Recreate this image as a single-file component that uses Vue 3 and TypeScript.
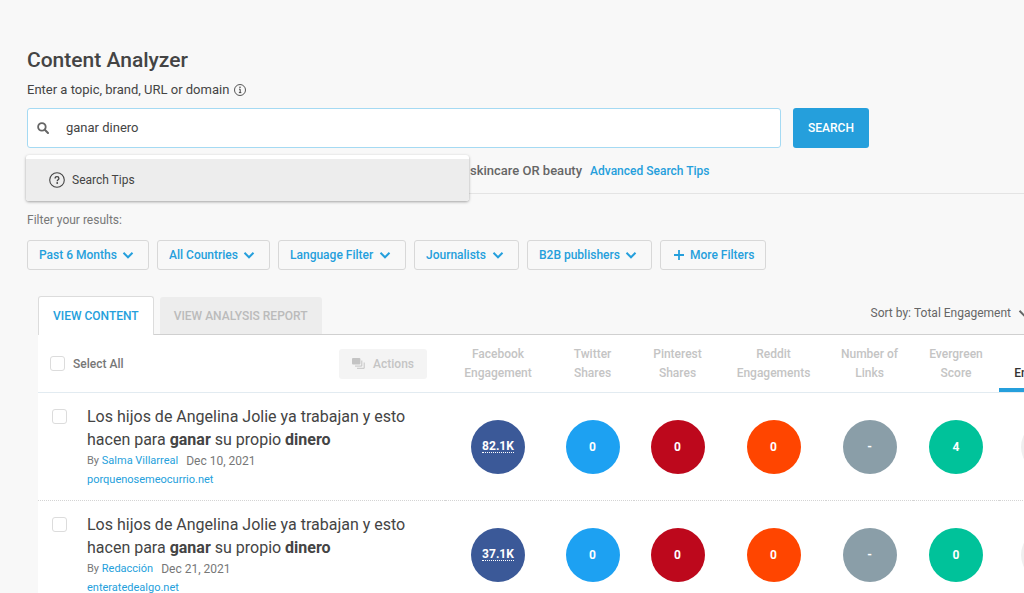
<script setup lang="ts">
import { ref } from 'vue'

interface Metric {
  key: string
  lines: [string, string]
}

interface Article {
  id: number
  author: string
  date: string
  domain: string
  values: Record<string, string>
}

const query = ref('ganar dinero')
const selected = ref<number[]>([])
const allSelected = ref(false)
const activeTab = ref<'content' | 'report'>('content')

const filters: string[] = [
  'Past 6 Months',
  'All Countries',
  'Language Filter',
  'Journalists',
  'B2B publishers',
]

const metrics: Metric[] = [
  { key: 'facebook', lines: ['Facebook', 'Engagement'] },
  { key: 'twitter', lines: ['Twitter', 'Shares'] },
  { key: 'pinterest', lines: ['Pinterest', 'Shares'] },
  { key: 'reddit', lines: ['Reddit', 'Engagements'] },
  { key: 'links', lines: ['Number of', 'Links'] },
  { key: 'evergreen', lines: ['Evergreen', 'Score'] },
  { key: 'total', lines: ['Total', 'Engagement'] },
]

const articles: Article[] = [
  {
    id: 1,
    author: 'Salma Villarreal',
    date: 'Dec 10, 2021',
    domain: 'porquenosemeocurrio.net',
    values: { facebook: '82.1K', twitter: '0', pinterest: '0', reddit: '0', links: '-', evergreen: '4' },
  },
  {
    id: 2,
    author: 'Redacción',
    date: 'Dec 21, 2021',
    domain: 'enteratedealgo.net',
    values: { facebook: '37.1K', twitter: '0', pinterest: '0', reddit: '0', links: '-', evergreen: '0' },
  },
]

function toggleAll() {
  selected.value = allSelected.value ? articles.map((a) => a.id) : []
}
</script>

<template>
  <main class="page">
    <header class="intro">
      <h1>Content Analyzer</h1>
      <label class="prompt" for="query">
        Enter a topic, brand, URL or domain
        <svg class="info" viewBox="0 0 12 12" aria-hidden="true">
          <circle cx="6" cy="6" r="5.5" fill="none" stroke="currentColor" stroke-width=".9" />
          <path d="M5 5.2h1.2v3.2M4.9 8.6h2.4" fill="none" stroke="currentColor" stroke-width="1" />
          <circle cx="6" cy="3.3" r=".8" fill="currentColor" />
        </svg>
      </label>

      <form class="search" @submit.prevent>
        <div class="field">
          <svg class="magnifier" viewBox="0 0 12 12" aria-hidden="true">
            <circle cx="4.9" cy="4.9" r="3.8" fill="none" stroke="currentColor" stroke-width="1.8" />
            <path d="M7.8 7.8l3.2 3.2" stroke="currentColor" stroke-width="2" stroke-linecap="round" />
          </svg>
          <input id="query" v-model="query" type="text" autocomplete="off" />
          <div class="suggestions">
            <button type="button" class="suggestion">
              <svg viewBox="0 0 16 16" aria-hidden="true">
                <circle cx="8" cy="8" r="7.3" fill="none" stroke="currentColor" stroke-width="1.1" />
                <path
                  d="M6.1 6.5c0-1.1.8-1.8 1.9-1.8s1.9.7 1.9 1.7c0 1.3-1.7 1.4-1.7 2.9"
                  fill="none"
                  stroke="currentColor"
                  stroke-width="1.3"
                />
                <circle cx="8.2" cy="11" r=".9" fill="currentColor" />
              </svg>
              Search Tips
            </button>
          </div>
        </div>
        <button type="submit" class="submit">SEARCH</button>
      </form>

      <p class="hint">
        <strong>skincare OR beauty</strong>
        <a href="#">Advanced Search Tips</a>
      </p>
    </header>

    <section class="filters">
      <p>Filter your results:</p>
      <div class="filter-row">
        <label v-for="name in filters" :key="name" class="filter">
          <select :aria-label="name">
            <option>{{ name }}</option>
          </select>
          <svg class="chevron" viewBox="0 0 12 12" aria-hidden="true">
            <path d="M1.5 3.8L6 8.3l4.5-4.5" fill="none" stroke="currentColor" stroke-width="2" />
          </svg>
        </label>
        <button type="button" class="filter more">
          <svg viewBox="0 0 12 12" aria-hidden="true">
            <path d="M6 1v10M1 6h10" stroke="currentColor" stroke-width="1.8" />
          </svg>
          More Filters
        </button>
      </div>
    </section>

    <section class="results">
      <div class="tabs">
        <button
          type="button"
          class="tab"
          :class="{ active: activeTab === 'content' }"
          @click="activeTab = 'content'"
        >
          VIEW CONTENT
        </button>
        <button
          type="button"
          class="tab"
          :class="{ active: activeTab === 'report' }"
          @click="activeTab = 'report'"
        >
          VIEW ANALYSIS REPORT
        </button>
        <label class="sort">
          Sort by:
          <select>
            <option>Total Engagement</option>
          </select>
          <svg class="chevron" viewBox="0 0 12 12" aria-hidden="true">
            <path d="M1.5 3.8L6 8.3l4.5-4.5" fill="none" stroke="currentColor" stroke-width="2" />
          </svg>
        </label>
      </div>

      <table>
        <colgroup>
          <col />
          <col v-for="m in metrics" :key="m.key" :class="'col-' + m.key" />
        </colgroup>
        <thead>
          <tr>
            <th scope="col">
              <div class="bulk">
                <label>
                  <input v-model="allSelected" type="checkbox" @change="toggleAll" />
                  Select All
                </label>
                <button type="button" class="actions" disabled>
                  <svg viewBox="0 0 13 11" aria-hidden="true">
                    <rect x="0" y="0" width="8.4" height="6.6" rx="1" fill="currentColor" />
                    <path d="M9.8 2.5v5.6H3M12.2 4.5v5.8H5" fill="none" stroke="currentColor" stroke-width="1" />
                  </svg>
                  Actions
                </button>
              </div>
            </th>
            <th v-for="m in metrics" :key="m.key" scope="col" class="metric" :class="{ sorted: m.key === 'total' }">
              {{ m.lines[0] }}<br />{{ m.lines[1] }}
            </th>
          </tr>
        </thead>
        <tbody>
          <tr v-for="a in articles" :key="a.id">
            <td>
              <div class="article">
                <input v-model="selected" type="checkbox" :value="a.id" :aria-label="a.domain" />
                <div>
                  <h2>
                    Los hijos de Angelina Jolie ya trabajan y esto hacen para <strong>ganar</strong> su propio
                    <strong>dinero</strong>
                  </h2>
                  <p class="byline">
                    <span>By <a href="#">{{ a.author }}</a></span>
                    <time>{{ a.date }}</time>
                  </p>
                  <a class="domain" href="#">{{ a.domain }}</a>
                </div>
              </div>
            </td>
            <td v-for="m in metrics" :key="m.key" class="score">
              <span class="bubble" :class="m.key"><span>{{ a.values[m.key] }}</span></span>
            </td>
          </tr>
        </tbody>
      </table>
    </section>
  </main>
</template>

<style>
body {
  background: #f8f8f8;
}
</style>

<style scoped>
.page {
  min-height: 100vh;
  box-sizing: border-box;
  padding-top: 46px;
  overflow: hidden;
  background: #f8f8f8;
  color: #444;
  font-family: Roboto, "Liberation Sans", sans-serif;
  font-size: 12px;
  line-height: 20px;
}
h1,
h2,
p {
  margin: 0;
}
button,
input,
select {
  margin: 0;
  padding: 0;
  border: 0;
  background: none;
  color: inherit;
  font: inherit;
}
select {
  appearance: none;
  outline: 0;
}
a {
  color: #259fdc;
  text-decoration: none;
}
svg {
  flex: none;
}
.intro {
  margin-left: 27px;
  padding-bottom: 12px;
  border-bottom: 1px solid #e4e4e4;
}
h1 {
  font-size: 21px;
  font-weight: 500;
  line-height: 28px;
}
.prompt {
  display: flex;
  align-items: center;
  gap: 5px;
  margin-top: 6px;
  font-size: 13px;
}
.info {
  width: 12px;
  height: 12px;
}
.search {
  display: flex;
  gap: 12px;
  max-width: 842px;
  margin-top: 8px;
}
.field {
  position: relative;
  display: flex;
  flex: 1;
  align-items: center;
  gap: 17px;
  box-sizing: border-box;
  height: 40px;
  padding-left: 9px;
  border: 1px solid #a5daf3;
  border-radius: 3px;
  background: #fff;
}
.magnifier {
  width: 12px;
  height: 12px;
  color: #666;
}
.field input {
  flex: 1;
  min-width: 0;
  outline: 0;
  font-size: 13px;
}
.submit {
  width: 76px;
  height: 40px;
  border-radius: 3px;
  background: #259fdc;
  color: #fff;
  font-weight: 500;
}
.suggestions {
  position: absolute;
  z-index: 2;
  top: 46px;
  left: -2px;
  width: 443px;
  padding-top: 4px;
  border-radius: 3px;
  background: #fff;
  box-shadow: 0 1px 3px rgba(0, 0, 0, 0.35);
}
.suggestion {
  display: flex;
  align-items: center;
  gap: 7px;
  width: 100%;
  height: 42px;
  padding-left: 23px;
  border-radius: 0 0 3px 3px;
  background: #ededed;
}
.suggestion svg {
  width: 16px;
  height: 16px;
}
.hint {
  display: flex;
  gap: 8px;
  margin: 13px 0 0 443px;
  color: #666;
}
.hint strong {
  font-size: 13px;
  font-weight: 500;
}
.hint a {
  font-weight: 500;
}
.filters {
  margin: 16px 0 0 27px;
  color: #777;
}
.filter-row {
  display: flex;
  gap: 8px;
  margin-top: 10px;
}
.filter {
  display: flex;
  align-items: center;
  gap: 5px;
  box-sizing: border-box;
  height: 30px;
  padding: 0 14px 0 11px;
  border: 1px solid #d8d8d8;
  border-radius: 3px;
  color: #259fdc;
  font-weight: 500;
}
.filter svg {
  width: 12px;
  height: 12px;
}
.more {
  padding: 0 11px 0 12px;
}
.results {
  min-width: 1059px;
  margin: 26px 0 0 38px;
}
.tabs {
  display: flex;
  align-items: flex-end;
  gap: 6px;
  border-bottom: 1px solid #d0d0d0;
}
.tab {
  height: 37px;
  padding: 0 14px;
  border-radius: 3px 3px 0 0;
  background: #ededed;
  color: #bbb;
  font-weight: 500;
}
.tab.active {
  height: 39px;
  margin-bottom: -1px;
  border: 1px solid #dcdcdc;
  border-bottom: 0;
  background: #fff;
  color: #259fdc;
}
.sort {
  display: flex;
  align-items: center;
  gap: 3px;
  margin: 0 67px 11px auto;
  color: #666;
}
.chevron {
  width: 12px;
  height: 12px;
}
.sort .chevron {
  margin-left: 3px;
}
table {
  width: 100%;
  table-layout: fixed;
  border-collapse: collapse;
  background: #fff;
}
.col-facebook {
  width: 106px;
}
.col-twitter {
  width: 83px;
}
.col-pinterest {
  width: 87px;
}
.col-reddit {
  width: 105px;
}
.col-links {
  width: 87px;
}
.col-evergreen {
  width: 86px;
}
.col-total {
  width: 98px;
}
th,
td {
  padding: 0;
}
th {
  height: 57px;
  border-bottom: 1px solid #e2ebf1;
  color: #777;
  font-weight: 500;
}
.bulk {
  display: flex;
  align-items: center;
  justify-content: space-between;
  padding: 0 18px 0 12px;
}
.bulk label {
  display: flex;
  align-items: center;
  gap: 8px;
}
input[type="checkbox"] {
  appearance: none;
  flex: none;
  box-sizing: border-box;
  width: 15px;
  height: 15px;
  border: 1px solid #dcdcdc;
  border-radius: 3px;
  background: #fff;
}
input[type="checkbox"]:checked {
  background: #259fdc;
}
.actions {
  display: flex;
  align-items: center;
  gap: 8px;
  height: 30px;
  padding: 0 13px;
  border-radius: 3px;
  background: #f4f4f4;
  color: #c4c4c4;
}
.actions svg {
  width: 13px;
  height: 11px;
}
.metric {
  color: #c4c4c4;
  line-height: 19px;
  text-align: center;
}
.metric.sorted {
  color: #333;
  box-shadow: inset 0 -4px #259fdc;
}
tbody tr {
  border-bottom: 1px dotted #d4d4d4;
}
td {
  height: 107px;
  vertical-align: top;
}
.article {
  display: flex;
  gap: 20px;
  padding: 12px 24px 0 14px;
}
.article input {
  margin-top: 4px;
}
h2 {
  font-size: 16px;
  font-weight: 400;
  line-height: 23px;
}
.byline {
  display: flex;
  gap: 8px;
  color: #777;
  font-size: 11px;
}
.byline time {
  font-size: 12px;
}
.domain {
  display: block;
  font-size: 11px;
  line-height: 17px;
}
.score {
  vertical-align: middle;
}
.bubble {
  display: flex;
  align-items: center;
  justify-content: center;
  width: 54px;
  height: 54px;
  margin: 0 auto;
  border-radius: 50%;
  color: #fff;
  font-weight: 700;
  line-height: 12px;
}
.facebook {
  background: #3b5998;
}
.facebook span {
  border-bottom: 1px dotted #fff;
}
.twitter {
  background: #1da1f2;
}
.pinterest {
  background: #bd081c;
}
.reddit {
  background: #ff4500;
}
.links {
  background: #8a9ea8;
}
.evergreen {
  background: #00c29a;
}
.total {
  background: #efefef;
}
</style>
